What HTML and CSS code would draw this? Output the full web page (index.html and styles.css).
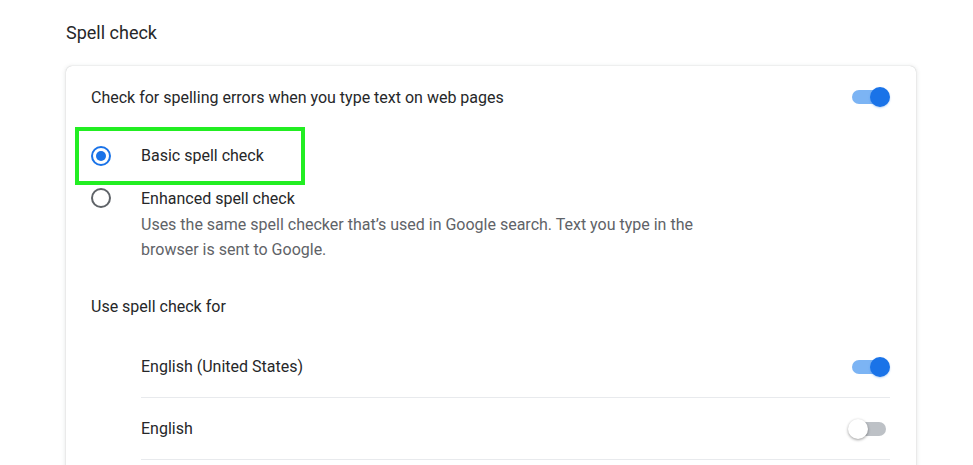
FILE: index.html
```html
<!DOCTYPE html>
<html lang="en">
<head>
    <meta charset="UTF-8">
    <meta name="viewport" content="width=device-width, initial-scale=1.0">
    <title>Spell check</title>
    <link rel="stylesheet" href="styles.css">
</head>
<body>

<div class="page">
    <h2 class="section-title">Spell check</h2>

    <div class="card">
        <div class="row main-row">
            <span>Check for spelling errors when you type text on web pages</span>
            <span class="toggle on"><span class="knob"></span></span>
        </div>

        <div class="radio-group">
            <div class="radio-item highlight">
                <span class="radio checked"></span>
                <span class="radio-label">Basic spell check</span>
            </div>
            <div class="radio-item enhanced">
                <span class="radio"></span>
                <div class="radio-text">
                    <span class="radio-label">Enhanced spell check</span>
                    <p class="secondary">Uses the same spell checker that’s used in Google search. Text you type in the browser is sent to Google.</p>
                </div>
            </div>
        </div>

        <div class="row sub-heading">Use spell check for</div>

        <div class="lang-list">
            <div class="lang-row">
                <span>English (United States)</span>
                <span class="toggle on"><span class="knob"></span></span>
            </div>
            <div class="lang-row">
                <span>English</span>
                <span class="toggle"><span class="knob"></span></span>
            </div>
        </div>
    </div>
</div>

</body>
</html>
```

FILE: styles.css
```css
body {
    margin: 0;
    padding: 0;
    background: #ffffff;
    font-family: 'Roboto', 'Liberation Sans', sans-serif;
    color: #262729;
    overflow: hidden;
}

.page {
    padding: 0 57px 0 66px;
}

.section-title {
    font-size: 18px;
    font-weight: 400;
    margin: 0;
    padding-top: 21px;
    height: 66px;
    box-sizing: border-box;
    line-height: 24px;
}

.card {
    border-radius: 6px;
    box-shadow: 0 0 1px rgba(60, 64, 67, 0.35), 0 1px 4px 1px rgba(60, 64, 67, 0.12);
    padding: 0 26px 0 25px;
    height: 420px;
    font-size: 16px;
}

.row {
    display: flex;
    align-items: center;
    justify-content: space-between;
}

.main-row {
    height: 62px;
}

/* toggles */
.toggle {
    position: relative;
    display: inline-block;
    width: 34px;
    height: 14px;
    border-radius: 7px;
    background: #bdc1c6;
    margin-right: 4px;
}

.toggle .knob {
    position: absolute;
    top: -3px;
    left: -4px;
    width: 20px;
    height: 20px;
    border-radius: 50%;
    background: #ffffff;
    box-shadow: 0 1px 3px rgba(0, 0, 0, 0.4);
}

.toggle.on {
    background: #7cb4f4;
}

.toggle.on .knob {
    left: auto;
    right: -4px;
    background: #1a73e8;
    box-shadow: 0 1px 2px rgba(26, 115, 232, 0.3);
}

/* radios */
.radio-group {
    display: flex;
    flex-direction: column;
}

.radio-item {
    display: flex;
    align-items: flex-start;
}

.radio {
    width: 16px;
    height: 16px;
    border: 2px solid #5f6368;
    border-radius: 50%;
    box-sizing: content-box;
    margin-right: 30px;
    position: relative;
    flex-shrink: 0;
}

.radio.checked {
    border-color: #1a73e8;
}

.radio.checked::after {
    content: "";
    position: absolute;
    top: 3px;
    left: 3px;
    width: 10px;
    height: 10px;
    border-radius: 50%;
    background: #1a73e8;
}

.highlight {
    align-items: center;
    width: 210px;
    height: 50px;
    margin-left: -16px;
    padding-left: 12px;
    border: 4px solid #22ee22;
    margin-top: -1px;
}

.radio-label {
    line-height: 22px;
}

.enhanced {
    margin-top: 3px;
}

.secondary {
    margin: 0;
    color: #5f6368;
    line-height: 25px;
    width: 575px;
    padding-top: 2px;
}

.sub-heading {
    height: 34px;
    margin-top: 27px;
}

.lang-list {
    margin-left: 50px;
    margin-top: 13px;
}

.lang-row {
    display: flex;
    align-items: center;
    justify-content: space-between;
    height: 61px;
    border-bottom: 1px solid #e8eaed;
}
```
